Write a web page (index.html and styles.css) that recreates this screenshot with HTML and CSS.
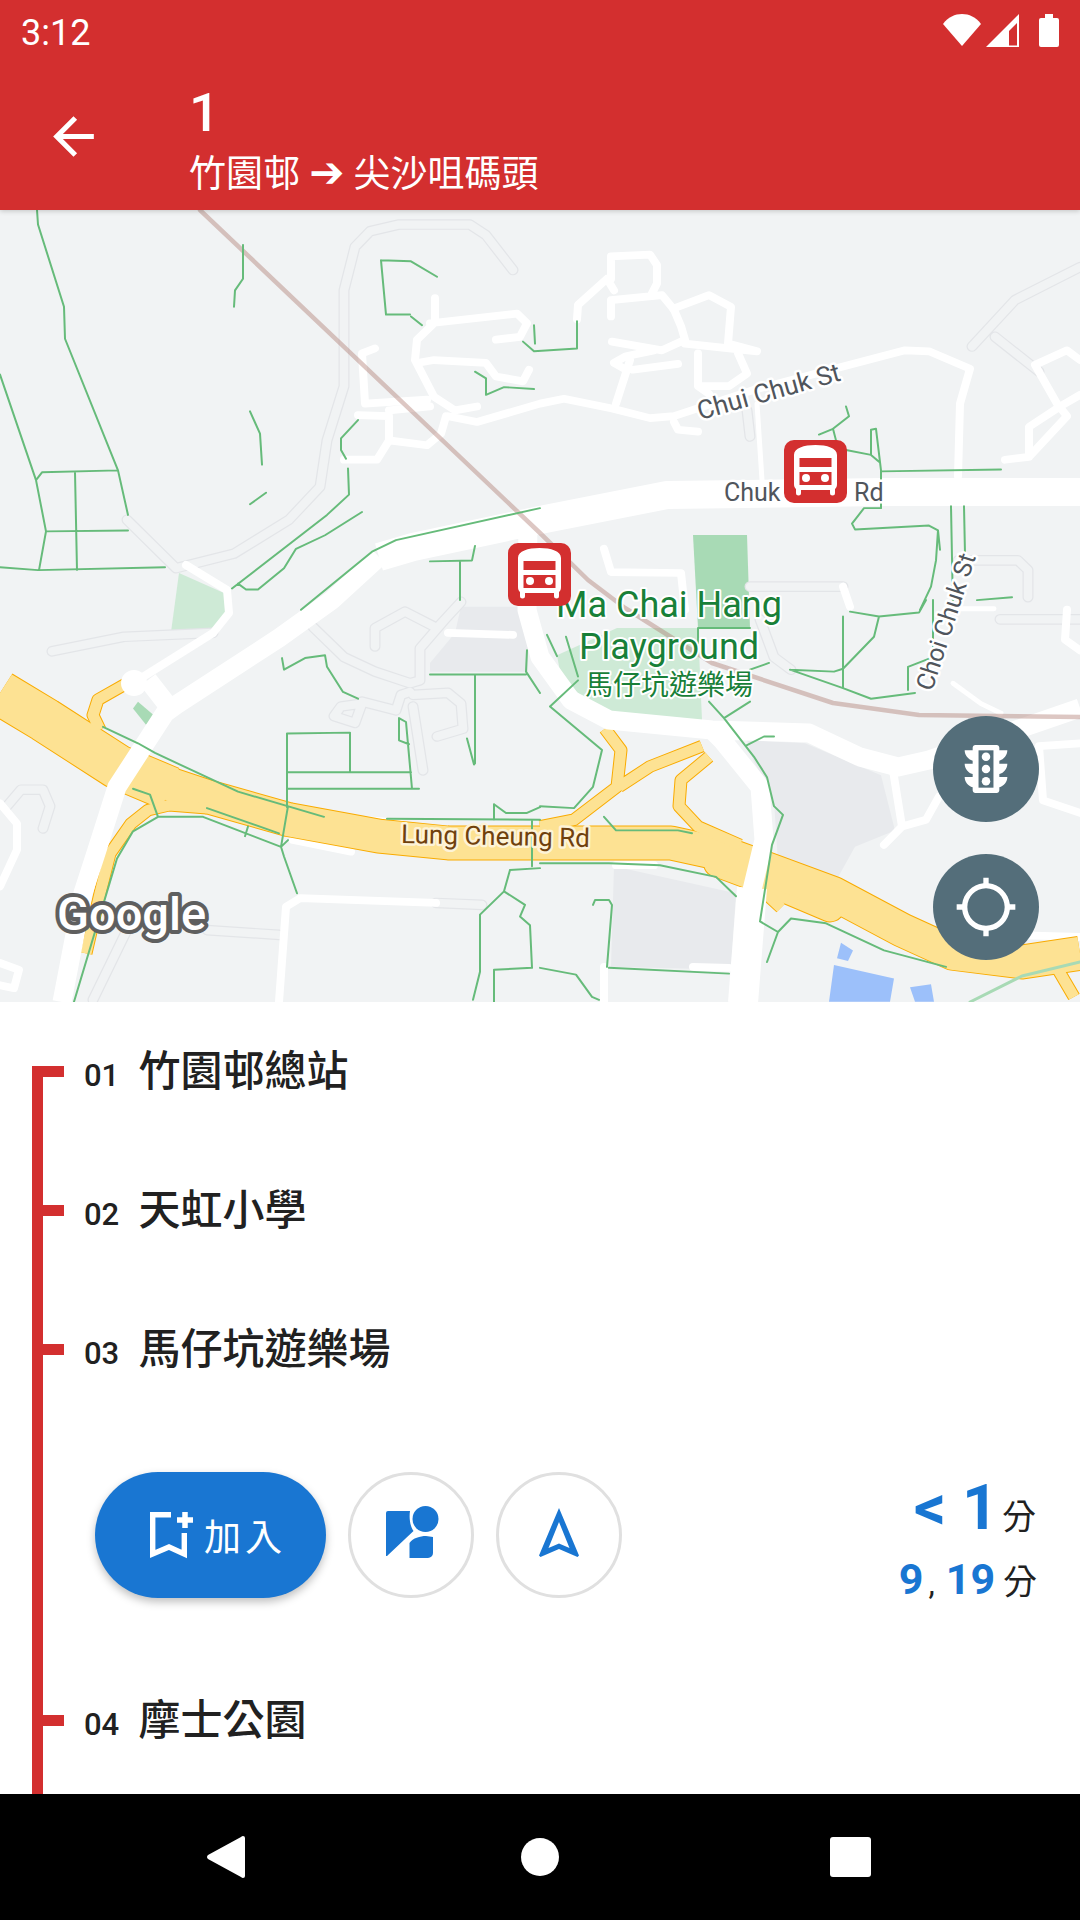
FILE: index.html
```html
<!DOCTYPE html>
<html lang="zh-Hant">
<head>
    <meta charset="UTF-8">
    <meta name="viewport" content="width=device-width, initial-scale=1.0">
    <title>1 竹園邨 → 尖沙咀碼頭</title>
    <link rel="stylesheet" href="styles.css">
</head>
<body>
    <header class="top">
        <div class="status">
            <span class="clock">3:12</span>
            <div class="status-icons">
                <svg width="38" height="32" viewBox="0 0 38 32"><path d="M19 0C26 0 33 3 38 10L19 32 0 10C5 3 12 0 19 0Z"/></svg>
                <svg width="33" height="33" viewBox="0 0 33 33"><path fill-rule="evenodd" d="M33 0V33H0ZM31 9l-8 8V31.500H31Z"/></svg>
                <svg width="20" height="33" viewBox="0 0 20 33"><path d="M6 0H14V4H18Q20 4 20 6V31Q20 33 18 33H2Q0 33 0 31V6Q0 4 2 4H6Z"/></svg>
            </div>
        </div>
        <div class="appbar">
            <svg class="back" width="61" height="61" viewBox="0 0 24 24"><path d="M20 11H7.830l5.590-5.590L12 4l-8 8 8 8 1.410-1.410L7.830 13H20v-2z"/></svg>
            <div class="route">
                <div class="route-no">1</div>
                <div class="route-dest">竹園邨 <span class="route-arrow">➔</span> 尖沙咀碼頭</div>
            </div>
        </div>
    </header>

    <section class="map">
        <svg class="map-canvas" width="1080" height="792" viewBox="0 210 1080 792">
            <defs>
                <symbol id="stop-pin" viewBox="0 0 63 63">
                    <rect width="63" height="63" rx="10" fill="#d32f2f"/>
                    <path fill="#fff" d="M10 15C10 8 20 5 31.500 5S53 8 53 15V44C53 47 52 48 51 49V53A2.500 2.500 0 0 1 46 53V50H17V53A2.500 2.500 0 0 1 12 53V49C11 48 10 47 10 44Z"/>
                    <path fill="#d32f2f" d="M15.500 18H47.500V27H15.500ZM15.500 32H47.500V45H15.500Z"/>
                    <circle cx="22" cy="38" r="4" fill="#fff"/>
                    <circle cx="41" cy="38" r="4" fill="#fff"/>
                </symbol>
                <path id="pale-upper" d="M513 272L486 236 470 225H399L370 232 355 248 344 293V392L327 448 320 496 289 530 234 565 176 580 127 530M1080 269L1015 303 972 351M995 341L1039 377M958 572H1018L1028 582V610M750 599H843M747 417L750 444"/>
                <path id="pale-lower" d="M375 648V629L405 612 437 629 461 602M313 628L344 659 375 674 410 686 420 683V650L445 620M413 698L448 696 461 707 463 733 437 741M413 710L423 776M341 710L362 707 355 727 334 720ZM362 705L396 714 401 698 410 695M52 653L124 638 213 634M7 813L21 796H43L50 813 43 836M207 941L279 946M127 941L93 1013M436 913L482 915M760 620L774 659 791 672M1000 620H1080"/>
            </defs>

            <rect x="0" y="210" width="1080" height="792" fill="#f1f3f4"/>

            <path class="park-light" d="M179 573L224 593 226 613 212 632H171Z"/>
            <path class="park-dark" d="M693 535H747L750 628H698Z"/>

            <g transform="matrix(1 0 0 .968 0 6.720)">
                <use href="#pale-upper" class="pale-edge"/>
                <use href="#pale-upper" class="pale-fill"/>
                <path class="road-sm" d="M435 301V324M430 327L517 317 527 327 520 341 496 344M434 327L417 344 415 365 434 403 455 417 477 413M417 368L434 365 486 368 496 382 523 387 529 375M375 353L362 358 365 410 427 406M358 422L389 423V448L377 468H344M389 448L427 453 441 441 446 423M389 417L430 413M448 423L477 429 540 410 564 405 612 415 650 425 674 423 753 396 905 355 929 356 970 374 960 410 958 485"/>
                <path class="road-sm" d="M577 323L578 308 607 281 614 293M611 320V303L662 298 674 313 681 330 685 344 662 355 612 346M611 258L650 256 657 267V286L652 296M611 258V281M673 312L709 298 731 310 728 348 757 356 685 348M698 358V392L709 400M738 358L747 379 729 392H702M654 355L626 361 614 368 626 375M630 365L616 410M633 375L678 369M674 429L678 437 698 439M604 560L611 584 681 585 685 623M843 599L850 620"/>
                <path class="road-sm" d="M1005 468L1029 465 1067 423 1057 410 1035 370 1067 355 1080 365M1080 401L1060 413 1029 434V465"/>
                <path class="road-xs" d="M757 410L762 489"/>
            </g>

            <g transform="matrix(1 0 0 .968 0 19.200)">
                <path class="building" d="M747 745L805 748 881 781 895 838 855 855 834 894 778 872 774 807 753 765ZM614 875L736 903 731 982 611 979ZM461 607H528V674H430V665L455 634Z"/>
                <path class="park-light" d="M557 657L617 629H698L702 724 633 720 592 710 561 679Z"/>
                <path class="park-dark" d="M138 705L155 720 146 729 133 712Z"/>
                <path class="blue-block" d="M841 954L853 962 848 973 837 970ZM834 977L894 991 890 1015H829ZM910 1000L931 997 934 1015H915Z"/>
                <use href="#pale-lower" class="pale-edge"/>
                <use href="#pale-lower" class="pale-fill"/>
                <path class="road-sm" d="M448 634L513 636M0 810L17 831V858L0 896M0 975L19 982 14 1001 0 998M436 913L300 908 286 917 279 1015M324 824L399 830M293 848L351 860M693 979L729 980M604 979V1015M616 874H654M1067 610L1065 641 1080 652M850 906L936 944 1080 948M1039 751L1080 748M1039 751L1043 807 1080 820M893 776L902 834 884 853M902 834L926 827 939 803"/>
                <path class="road-xs" d="M953 686L981 707 1001 717M994 609H953"/>
                <path class="hwy-edge hwy-left" d="M0 696L45 724 117 772 170 795"/>
                <path class="hwy-edge hwy-split" d="M718 872L775 894 830 918"/>
                <path class="hwy-edge" d="M117 772L207 803 289 827 379 844 448 851 540 851H671L733 865 833 903 902 941 953 965 1022 974 1080 965"/>
                <path class="ramp-edge" d="M127 686L98 703 93 719 100 734M207 815L169 812 148 817 131 831 110 862 100 903 86 965M605 733L621 755 617 793 574 827 540 834M702 751L650 772 619 793M709 762L681 786 679 813 698 834 740 853M733 872L781 918M1057 980L1074 1010"/>
                <path class="hwy hwy-left" d="M0 696L45 724 117 772 170 795"/>
                <path class="hwy hwy-split" d="M718 872L775 894 830 918"/>
                <path class="hwy" d="M117 772L207 803 289 827 379 844 448 851 540 851H671L733 865 833 903 902 941 953 965 1022 974 1080 965"/>
                <path class="ramp" d="M127 686L98 703 93 719 100 734M207 815L169 812 148 817 131 831 110 862 100 903 86 965M605 733L621 755 617 793 574 827 540 834M702 751L650 772 619 793M709 762L681 786 679 813 698 834 740 853M733 872L781 918M1057 980L1074 1010"/>
            </g>

            <path class="road-md" d="M379 557L332 600 279 638 176 705 165 713 117 787 96 853 83 893 62 1002M148 680L169 707"/>
            <path class="road-sm" d="M186 565L227 590 229 613 213 633 138 680"/>
            <circle cx="134" cy="683" r="13" fill="#fff"/>
            <path class="road-lg" d="M1080 492H884L667 495 540 520 413 547 379 557"/>
            <path class="road-md" d="M528 520L527 610 540 657 571 700 609 720 712 730 809 733 860 757 898 767 929 760 1080 708M712 730L722 740 760 787 764 840 752 890"/>
            <path class="road-wide" d="M752 888L743 1003"/>

            <path class="rail" d="M200 210L540 533 588 580 625 608 712 663 833 703 919 715 1080 717"/>

            <g class="trail" transform="matrix(1 0 0 .968 0 6.720)">
                <path d="M37 210L38 225 64 310 65 343 118 479 128 525M0 380L36 489 46 542 39 582M36 489L42 481 118 479M75 481L77 582M46 542L128 541M0 579L38 582 165 579M243 246V281L235 293 234 310M250 418L260 441 262 473M266 502L250 514M381 262L411 263 437 279M381 262L386 318H410M411 320L422 329M348 477L349 504 327 525 232 601M362 522L325 546 296 560 284 580 258 602H246L238 596M540 518L396 551 372 563 301 623M430 573L472 572 475 557M460 573V613M358 427L341 446V458L346 467M534 329L535 348M523 346L534 356 577 353 577 325M486 384V401L504 393 534 395M475 377L486 384"/>
                <path d="M846 413L849 423 833 436 819 442M833 436L836 448M846 458L871 463 879 470M871 437L876 436 881 479V518H864L852 534 855 540 929 536 938 541 940 561M871 437V463M881 480L1001 478M951 516L953 623M964 516L965 565M938 541L936 572 931 599 920 623M977 613L1012 610"/>
            </g>
            <g class="trail" transform="matrix(1 0 0 .968 0 19.200)">
                <path d="M282 660L284 672 305 660 325 657 327 669 343 695 358 702M287 738L350 737V778M287 738V814M287 778H411M287 795H419M399 722L406 726 412 795M399 722V745L409 749M475 677V769M430 677H526M467 743L474 770M527 652L526 674 540 696M103 731L138 748 155 758 238 798 324 824M133 795L150 801 158 824H203M158 824L133 839 117 867 74 1015M203 824L281 855 288 848M207 815L279 841M248 834L245 844M288 813L281 855 284 865 297 903M387 826L540 827M494 811V827M494 811L506 820H527L540 814M532 827V875M510 879L504 901 480 925V984L473 1013M504 901L525 915 520 927 530 936 532 980 494 982V1015M510 879L540 877"/>
                <path d="M540 813L574 815 593 793 602 755 550 710 578 683M566 638L578 679M547 636L557 658M604 824L616 838H678L692 841M709 705L724 722 750 705M724 722L754 762 767 783 774 813 783 822 772 853 760 932 778 943 767 974M778 943L791 929 826 934 884 962 946 979M747 750L764 741H774M540 872H609L660 874 716 886 736 906M593 915L595 910H609L612 915 607 979M540 980L576 987 592 1010 599 1013M609 980L729 986M850 612L879 617 919 613 926 600M843 617V691L790 672M790 672L834 674 843 671 874 638 879 617M933 600V659L908 669V693M843 691L871 702 915 696M698 629H750M698 629V645M750 672L769 665"/>
            </g>
            <path class="trail-soft" d="M970 1002L1022 976 1080 962"/>

            <text class="lbl lbl-road lbl-road-lg" transform="translate(700 420) rotate(-15.600)">Chui Chuk St</text>
            <text class="lbl lbl-road" x="724" y="501">Chuk</text>
            <text class="lbl lbl-road" x="854" y="501">Rd</text>
            <text class="lbl lbl-road" transform="translate(932 692) rotate(-72)">Choi Chuk St</text>
            <text class="lbl lbl-hwy" transform="translate(401 843) rotate(1.200)">Lung Cheung Rd</text>
            <text class="lbl lbl-park" x="669" y="617">Ma Chai Hang</text>
            <text class="lbl lbl-park" x="669" y="659">Playground</text>
            <text class="lbl lbl-park-zh" x="669" y="695">馬仔坑遊樂場</text>
            <text class="logo" x="57" y="930">Google</text>

            <use href="#stop-pin" x="784" y="440" width="63" height="63"/>
            <use href="#stop-pin" x="508" y="543" width="63" height="63"/>
        </svg>

        <div class="map-btns">
            <div class="map-btn">
                <svg width="64" height="64" viewBox="0 0 24 24">
                    <path fill="#fff" d="M20 10h-3V8.860c1.720-.450 3-2 3-3.860h-3V4c0-.550-.450-1-1-1H8c-.550 0-1 .450-1 1v1H4c0 1.860 1.280 3.410 3 3.860V10H4c0 1.860 1.280 3.410 3 3.860V15H4c0 1.860 1.280 3.410 3 3.860V20c0 .550.450 1 1 1h8c.550 0 1-.450 1-1v-1.140c1.720-.450 3-2 3-3.860h-3v-1.140c1.720-.450 3-2 3-3.860z"/>
                    <rect x="9.200" y="5" width="5.600" height="14" fill="#546e7a"/>
                    <circle cx="12" cy="7.400" r="1.600" fill="#fff"/>
                    <circle cx="12" cy="12" r="1.600" fill="#fff"/>
                    <circle cx="12" cy="16.600" r="1.600" fill="#fff"/>
                </svg>
            </div>
            <div class="map-btn">
                <svg width="64" height="64" viewBox="0 0 24 24"><path fill="#fff" d="M20.940 11c-.460-4.170-3.770-7.480-7.940-7.940V1h-2v2.060C6.830 3.520 3.520 6.830 3.060 11H1v2h2.060c.460 4.170 3.770 7.480 7.940 7.940V23h2v-2.060c4.170-.460 7.480-3.770 7.940-7.940H23v-2h-2.060zM12 19c-3.870 0-7-3.130-7-7s3.130-7 7-7 7 3.130 7 7-3.130 7-7 7z"/></svg>
            </div>
        </div>
    </section>

    <section class="stops">
        <div class="stop"><span class="tick"></span><span class="num">01</span><span class="name">竹園邨總站</span></div>
        <div class="stop"><span class="tick"></span><span class="num">02</span><span class="name">天虹小學</span></div>
        <div class="stop"><span class="tick"></span><span class="num">03</span><span class="name">馬仔坑遊樂場</span></div>
        <div class="detail">
            <div class="actions">
                <div class="add-btn">
                    <svg width="43" height="47" viewBox="0 0 43 47"><path fill="none" stroke="#fff" stroke-width="5.400" d="M21 2.700H2.700V42L19 35 34.300 42V21"/><path fill="none" stroke="#fff" stroke-width="5.500" d="M27 8H43M35 0V16"/></svg>
                    <span>加入</span>
                </div>
                <div class="round-btn">
                    <svg width="70" height="70" viewBox="0 0 70 70"><path fill="#1976d2" d="M10 13A2 2 0 0 1 12 11H34C33 18 34 26 37.500 31L11 56H10ZM33.500 43C37 38 44 36 50 36L57 37V53A5 5 0 0 1 52 58H33.500Z"/><circle cx="49.500" cy="19" r="13" fill="#1976d2"/></svg>
                </div>
                <div class="round-btn">
                    <svg width="70" height="70" viewBox="0 0 70 70"><path fill="#1976d2" fill-rule="evenodd" d="M35 8L55 55.500 53.500 57 35 49 16.500 57 15 55.500ZM35 22L24.500 48 35 43.500 45.500 48Z"/></svg>
                </div>
            </div>
            <div class="eta">
                <div class="eta-first"><b>&lt; 1</b> <span class="unit">分</span></div>
                <div class="eta-next"><b>9</b><span class="comma">,</span> <b>19</b> <span class="unit">分</span></div>
            </div>
        </div>
        <div class="stop"><span class="tick"></span><span class="num">04</span><span class="name">摩士公園</span></div>
    </section>

    <nav class="navbar">
        <svg width="38" height="42" viewBox="0 0 38 42"><path d="M36 0Q38 0 38 2V40Q38 42 36 42 35 42 34 41L1 23Q-1 21 1 19L34 1Q35 0 36 0Z"/></svg>
        <svg class="nav-home" width="38" height="38" viewBox="0 0 38 38"><circle cx="19" cy="19" r="19"/></svg>
        <svg width="41" height="40" viewBox="0 0 41 40"><rect width="41" height="40" rx="3"/></svg>
    </nav>
</body>
</html>
```

FILE: styles.css
```css
*{
    margin: 0;
    padding: 0;
    box-sizing: border-box;
}
body{
    width: 1080px;
    height: 1920px;
    display: flex;
    flex-direction: column;
    overflow: hidden;
    background: #fff;
    color: #212121;
    font-family: Roboto, "Noto Sans CJK TC", sans-serif;
}

/* top bar */
.top{
    height: 210px;
    background: #d32f2f;
    color: #fff;
    position: relative;
    z-index: 2;
    box-shadow: 0 1px 5px rgba(0,0,0,0.2);
}
.status{
    height: 62px;
    padding: 14px 21px 0 21px;
    display: flex;
    justify-content: space-between;
    align-items: flex-start;
}
.clock{
    font-size: 36px;
    line-height: 38px;
}
.status-icons{
    display: flex;
    gap: 5px;
    align-items: flex-start;
}
.status-icons svg{
    fill: #fff;
}
.status-icons svg:last-child{
    margin-left: 15px;
}
.appbar{
    display: flex;
    align-items: center;
    height: 148px;
    padding-left: 43px;
}
.back{
    fill: #fff;
    margin-top: 1px;
}
.route{
    margin-left: 85px;
    padding-top: 10px;
}
.route-no{
    font-size: 54px;
    line-height: 60px;
    font-weight: 500;
}
.route-dest{
    font-size: 37px;
    line-height: 50px;
    margin-top: 7px;
    white-space: pre;
}
.route-arrow{
    font-family: "DejaVu Sans", sans-serif;
    font-size: 42px;
    line-height: 0;
}

/* map */
.map{
    height: 792px;
    position: relative;
    overflow: hidden;
}
.map-canvas{
    display: block;
}
.building{
    fill: #e8eaed;
}
.park-light{
    fill: #ceead6;
}
.park-dark{
    fill: #a8dab5;
}
.blue-block{
    fill: #9cc0fa;
}
.pale-edge,.pale-fill,.road-xs,.road-sm,.road-md,.road-lg,.road-wide,.hwy,.hwy-edge,.ramp,.ramp-edge,.rail,.trail path,.trail-soft{
    fill: none;
    stroke-linejoin: round;
    stroke-linecap: round;
}
.pale-edge{
    stroke: #e3e5e8;
    stroke-width: 11;
}
.pale-fill{
    stroke: #f1f3f4;
    stroke-width: 8.500;
}
.road-xs{
    stroke: #fff;
    stroke-width: 5;
}
.road-sm{
    stroke: #fff;
    stroke-width: 8;
}
.road-md{
    stroke: #fff;
    stroke-width: 19;
    stroke-linecap: butt;
}
.road-lg{
    stroke: #fff;
    stroke-width: 28;
    stroke-linecap: butt;
}
.road-wide{
    stroke: #fff;
    stroke-width: 30;
    stroke-linecap: butt;
}
.hwy-edge{
    stroke: #f9ab00;
    stroke-width: 36;
    stroke-linecap: butt;
}
.hwy{
    stroke: #fde293;
    stroke-width: 34;
    stroke-linecap: butt;
}
.hwy-edge.hwy-left{
    stroke-width: 47;
}
.hwy.hwy-left{
    stroke-width: 45;
}
.hwy-edge.hwy-split{
    stroke-width: 30;
    stroke-linecap: round;
}
.hwy.hwy-split{
    stroke-width: 28;
    stroke-linecap: round;
}
.ramp-edge{
    stroke: #f9ab00;
    stroke-width: 13;
    stroke-linecap: butt;
}
.ramp{
    stroke: #fde293;
    stroke-width: 11;
    stroke-linecap: butt;
}
.rail{
    stroke: rgba(170,115,105,0.4);
    stroke-width: 4.500;
}
.trail path{
    stroke: #66bb7a;
    stroke-width: 2;
}
.trail-soft{
    stroke: #a8dab5;
    stroke-width: 3;
}
.lbl{
    paint-order: stroke;
    stroke-linejoin: round;
    font-family: Roboto, "Noto Sans CJK TC", sans-serif;
}
.lbl-road{
    font-size: 25px;
    fill: #50555c;
    stroke: #fff;
    stroke-width: 5px;
}
.lbl-road-lg{
    font-size: 26px;
}
.lbl-hwy{
    font-size: 26px;
    fill: #70410d;
    stroke: #fdf3d7;
    stroke-width: 5px;
}
.lbl-park,.lbl-park-zh{
    text-anchor: middle;
    fill: #188038;
    stroke: #fff;
    stroke-width: 4px;
}
.lbl-park{
    font-size: 36px;
}
.lbl-park-zh{
    font-size: 28px;
}
.logo{
    font-family: Roboto, sans-serif;
    font-size: 47px;
    font-weight: 500;
    fill: #fff;
    stroke: #5f5f5f;
    stroke-width: 8px;
    stroke-linejoin: round;
    paint-order: stroke;
}
.map-btns{
    position: absolute;
    right: 41px;
    bottom: 42px;
    display: flex;
    flex-direction: column;
    gap: 32px;
}
.map-btn{
    width: 106px;
    height: 106px;
    border-radius: 50%;
    background: #546e7a;
    display: flex;
    align-items: center;
    justify-content: center;
}

/* stop list */
.stops{
    flex: 1;
    position: relative;
    overflow: hidden;
}
.stops::before{
    content: "";
    position: absolute;
    left: 32px;
    top: 64px;
    bottom: 0;
    width: 11px;
    background: #d32f2f;
}
.stop{
    height: 139px;
    padding-left: 43px;
    display: flex;
    align-items: center;
}
.tick{
    width: 21px;
    height: 11px;
    background: #d32f2f;
}
.num{
    width: 54.500px;
    margin-left: 20px;
    margin-top: 8px;
    font-size: 31px;
    font-weight: 500;
}
.name{
    font-size: 42px;
    font-weight: 500;
    margin-top: -9px;
}
.detail{
    height: 232px;
    padding: 0 43px 0 95px;
    display: flex;
    justify-content: space-between;
    align-items: center;
}
.actions{
    display: flex;
    gap: 22px;
}
.add-btn{
    width: 231px;
    height: 126px;
    border-radius: 63px;
    background: #1976d2;
    color: #fff;
    display: flex;
    align-items: center;
    padding-left: 55px;
    gap: 11px;
    font-size: 37px;
    letter-spacing: 4px;
    box-shadow: 0 4px 8px rgba(0,0,0,0.25);
}
.round-btn{
    width: 126px;
    height: 126px;
    border-radius: 50%;
    border: 3px solid #e0e0e0;
    display: flex;
    align-items: center;
    justify-content: center;
}
.eta{
    text-align: right;
    margin-top: 22px;
}
.eta b{
    color: #1976d2;
    font-weight: 700;
}
.unit{
    font-size: 34px;
}
.eta-first{
    line-height: 54px;
    margin-right: 1px;
}
.eta-first b{
    font-size: 63px;
}
.eta-next{
    font-size: 32px;
    line-height: 56px;
}
.eta-next b{
    font-size: 43px;
}
.comma{
    font-size: 32px;
    margin: 0 3px 0 5px;
}

/* navigation bar */
.navbar{
    height: 126px;
    flex-shrink: 0;
    background: #000;
    padding: 0 209px 0 207px;
    display: flex;
    justify-content: space-between;
    align-items: center;
}
.navbar svg{
    fill: #fff;
}
.nav-home{
    margin-left: 4px;
}
```
